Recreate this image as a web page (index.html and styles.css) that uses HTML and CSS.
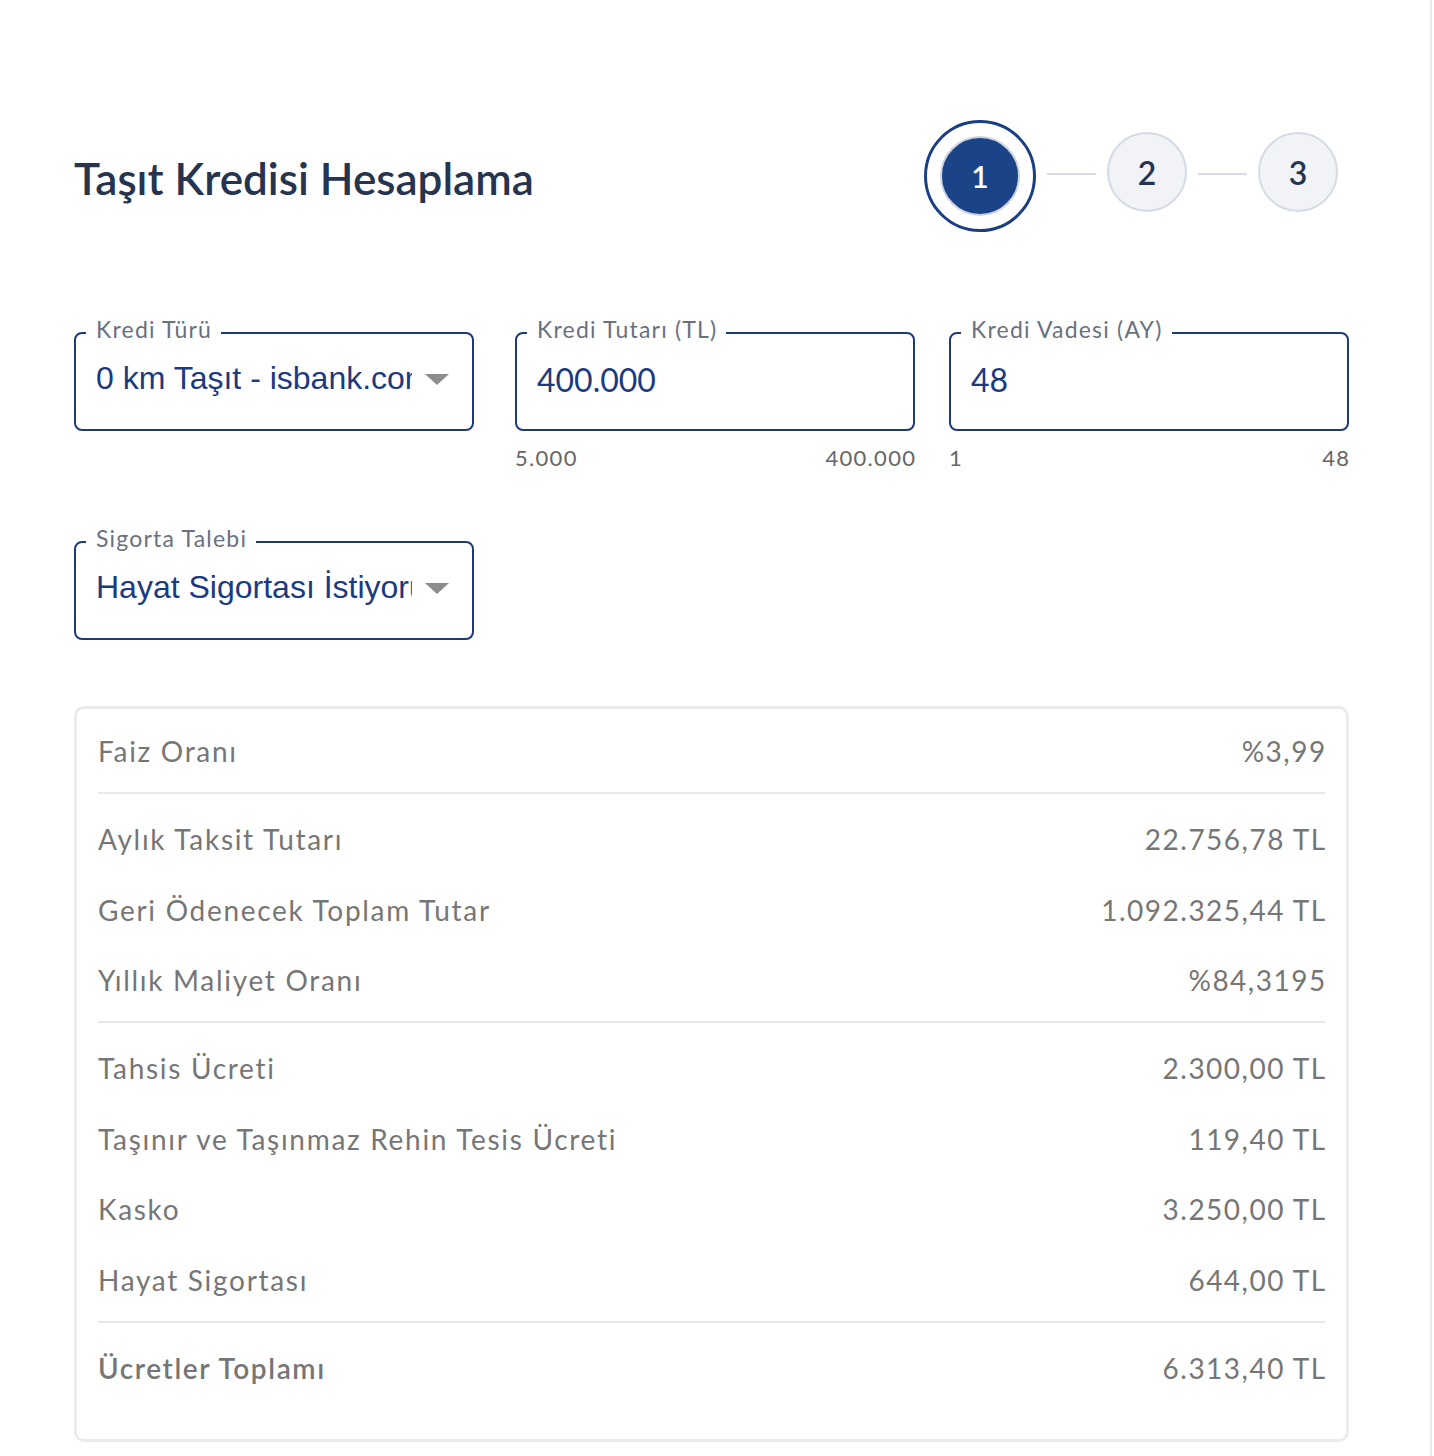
FILE: index.html
```html
<!DOCTYPE html>
<html lang="tr">
<head>
<meta charset="utf-8">
<title>Taşıt Kredisi Hesaplama</title>
<link rel="stylesheet" href="styles.css">
</head>
<body>
<div class="page">
  <div class="inner">
    <header class="head">
      <h1 class="title">Taşıt Kredisi Hesaplama</h1>
      <ol class="steps">
        <li class="step active"><span class="dot">1</span></li>
        <li class="sep"></li>
        <li class="step">2</li>
        <li class="sep"></li>
        <li class="step">3</li>
      </ol>
    </header>

    <div class="row row-first">
      <div class="field">
        <fieldset class="box">
          <legend>Kredi Türü</legend>
          <div class="value select">
            <span class="select-text">0 km Taşıt - isbank.com.tr</span>
            <svg class="arrow" width="24" height="12" viewBox="0 0 24 12"><polygon points="0,0 24,0 12,11" fill="#8c8c8c"/></svg>
          </div>
        </fieldset>
      </div>
      <div class="field">
        <fieldset class="box">
          <legend>Kredi Tutarı (TL)</legend>
          <div class="value num">400.000</div>
        </fieldset>
        <div class="range"><span>5.000</span><span class="end">400.000</span></div>
      </div>
      <div class="field">
        <fieldset class="box">
          <legend>Kredi Vadesi (AY)</legend>
          <div class="value num">48</div>
        </fieldset>
        <div class="range"><span>1</span><span class="end">48</span></div>
      </div>
    </div>

    <div class="row row-second">
      <div class="field">
        <fieldset class="box">
          <legend>Sigorta Talebi</legend>
          <div class="value select">
            <span class="select-text">Hayat Sigortası İstiyorum</span>
            <svg class="arrow" width="24" height="12" viewBox="0 0 24 12"><polygon points="0,0 24,0 12,11" fill="#8c8c8c"/></svg>
          </div>
        </fieldset>
      </div>
    </div>

    <section class="card">
      <div class="grp grp-first">
        <div class="line"><span>Faiz Oranı</span><span class="amt">%3,99</span></div>
      </div>
      <div class="grp">
        <div class="line"><span>Aylık Taksit Tutarı</span><span class="amt">22.756,78 TL</span></div>
        <div class="line"><span>Geri Ödenecek Toplam Tutar</span><span class="amt">1.092.325,44 TL</span></div>
        <div class="line"><span>Yıllık Maliyet Oranı</span><span class="amt">%84,3195</span></div>
      </div>
      <div class="grp">
        <div class="line"><span>Tahsis Ücreti</span><span class="amt">2.300,00 TL</span></div>
        <div class="line"><span>Taşınır ve Taşınmaz Rehin Tesis Ücreti</span><span class="amt">119,40 TL</span></div>
        <div class="line"><span>Kasko</span><span class="amt">3.250,00 TL</span></div>
        <div class="line"><span>Hayat Sigortası</span><span class="amt">644,00 TL</span></div>
      </div>
      <div class="grp">
        <div class="line total"><span class="total-label">Ücretler Toplamı</span><span class="amt">6.313,40 TL</span></div>
      </div>
    </section>
  </div>
</div>
</body>
</html>
```

FILE: styles.css
```css
* { box-sizing: border-box; }
html, body { margin: 0; padding: 0; background: #fff; }
body { font-family: Lato, "Open Sans", sans-serif; }

.page {
  width: 1432px;
  min-height: 1456px;
  border-right: 2px solid #ebebeb;
  padding: 120px 0 0 74px;
}
.inner { width: 1275px; }

.head {
  display: flex;
  justify-content: space-between;
  align-items: center;
  height: 112px;
}
.title {
  margin: 4px 0 0 0;
  font-size: 44px;
  font-weight: 600;
  color: #27344f;
  line-height: 52px;
}

.steps {
  display: flex;
  align-items: center;
  list-style: none;
  margin: 0;
  padding: 0 11px 0 0;
}
.step {
  width: 80px;
  height: 80px;
  border-radius: 50%;
  border: 2px solid #d5dbe4;
  background: #f1f3f7;
  display: flex;
  align-items: center;
  justify-content: center;
  font-size: 32px;
  font-weight: 600;
  color: #27344f;
  margin-bottom: 8px;
}
.step.active {
  width: 112px;
  height: 112px;
  border: 3px solid #1b3f84;
  background: #fff;
  margin-bottom: 0;
}
.dot {
  width: 80px;
  height: 80px;
  border-radius: 50%;
  background: #1b4387;
  border: 2px solid #cdd4e0;
  color: #fff;
  display: flex;
  align-items: center;
  justify-content: center;
  font-size: 30px;
}
.sep {
  width: 49px;
  height: 2px;
  background: #d8dde5;
  margin: 0 11px 4px;
}

.row {
  display: grid;
  grid-template-columns: 441px 434px 400px;
  align-items: start;
}
.row-first { margin-top: 84px; }
.row-second { margin-top: 54px; }
.field { width: 400px; }

.box {
  margin: 0;
  padding: 0;
  border: 2px solid #1e3a78;
  border-radius: 8px;
  min-width: 0;
}
.box legend {
  margin-left: 10px;
  padding: 0 9px 8px 10px;
  font-size: 23px;
  line-height: 26px;
  letter-spacing: 1.2px;
  color: #69717f;
}
.value {
  height: 79px;
  padding: 0 20px 20px;
  display: flex;
  align-items: center;
  color: #1b3a80;
}
.value.num {
  font-size: 32px;
}
.value.select {
  font-family: "Liberation Sans", Arial, sans-serif;
  font-size: 32px;
  padding-bottom: 22px;
}
.select-text {
  width: 316px;
  overflow: hidden;
  white-space: nowrap;
}
.arrow {
  margin: 3px 0 0 13px;
  flex: none;
}

.range {
  display: flex;
  justify-content: space-between;
  margin-top: 14px;
  font-size: 22px;
  line-height: 26px;
  letter-spacing: 1.3px;
  color: #666;
}
.range .end { margin-right: -1.3px; }

.card {
  margin-top: 66px;
  border: 3px solid #ebebeb;
  border-radius: 10px;
  padding: 0 21px 30px;
}
.grp {
  padding: 10px 0 5.5px;
  border-top: 2px solid #e9e9e9;
}
.grp-first {
  padding-top: 7px;
  border-top: 0;
}
.line {
  height: 70.5px;
  display: flex;
  justify-content: space-between;
  align-items: center;
  font-size: 28px;
  letter-spacing: 1.7px;
  color: #767676;
}
.line .amt { margin-right: -1.7px; letter-spacing: 1.5px; }
.total-label {
  font-weight: 600;
  letter-spacing: 1.6px;
}
```
